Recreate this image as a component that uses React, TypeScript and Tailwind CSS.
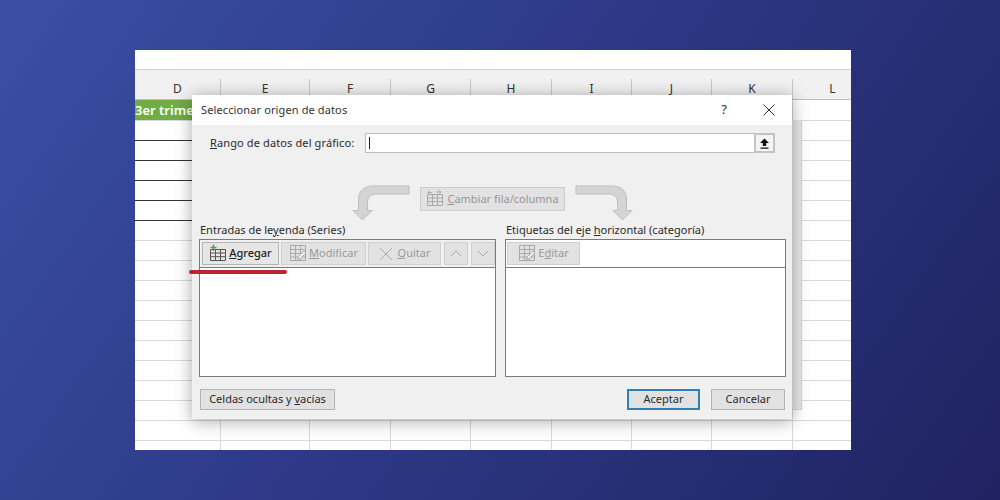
import React from "react";

const cols = [86, 89, 81, 80, 81, 80, 80, 81, 80];
const letters = ["D", "E", "F", "G", "H", "I", "J", "K", "L"];
const rows = Array.from({ length: 18 }, (_, i) => i);

function TableIcon({ plus, pencil, swap, color = "#a9a9a9" }: { plus?: boolean; pencil?: boolean; swap?: boolean; color?: string }) {
  return (
    <svg width="18" height="18" viewBox="0 0 18 18" fill="none" className="shrink-0 -mt-[2px]">
      {plus || swap ? (
        <path d="M1.5 5.5H16.5V16.5H1.5ZM1.5 9H16.5M1.5 12.7H16.5M6.5 5.5V16.5M11.5 5.5V16.5" stroke={color} strokeWidth="1" />
      ) : (
        <path d="M1.5 1.5H16.5V16.5H1.5ZM1.5 5.5H16.5M1.5 9.5H16.5M1.5 13H16.5M6.5 1.5V16.5M11.5 1.5V16.5" stroke={color} strokeWidth="1" />
      )}
      {plus && <path d="M4.5 0.5V7M1.5 3.5H7.5" stroke="#4e9a4a" strokeWidth="1.3" />}
      {swap && <path d="M2 3.5H6M4 1.5L2 3.5L4 5.5M10 3H15M13 1L15 3L13 5" stroke={color} strokeWidth="1" />}
      {pencil && (
        <path d="M8.5 15.5L9.5 12.5L15 7L17 9L11.5 14.5Z" fill="#f0f0f0" stroke={color} strokeWidth="1" />
      )}
    </svg>
  );
}

function CurveArrow({ flip }: { flip?: boolean }) {
  return (
    <svg width="59" height="37" viewBox="0 0 59 37" className={flip ? "-scale-x-100" : ""}>
      <path
        d="M57 2V10H25C18.5 10 15.5 13 15.5 19V26.5H20L10.5 36L1 26.5H6.5V15C6.5 7 12 2 21 2Z"
        fill="#d4d4d4"
        stroke="#bfbfbf"
        strokeWidth="1"
      />
    </svg>
  );
}

function ToolBtn({ w, children, active }: { w: string; children: React.ReactNode; active?: boolean }) {
  return (
    <div
      className={`${w} h-[23px] flex items-center justify-center gap-[2px] border shrink-0 ${
        active ? "border-[#b4b4b4] bg-[#e6e6e6] text-[#222]" : "border-[#d0d0d0] bg-[#e2e2e2] text-[#9a9a9a]"
      }`}
    >
      {children}
    </div>
  );
}

export default function App() {
  return (
    <div
      className="w-[1000px] h-[500px] overflow-hidden pt-[50px] pl-[135px] bg-[linear-gradient(125deg,#3a4fa3_0%,#2f3c8c_40%,#1f2360_100%)]"
      style={{ fontFamily: '"Noto Sans", "Open Sans", sans-serif' }}
    >
      <div className="relative w-[716px] h-[400px] bg-white overflow-hidden">
        <div className="h-[20px] border-b border-[#d0d0d0]" />
        <div className="h-[30px] flex bg-[#f1f1f1] border-b border-[#bdbdbd]">
          {letters.map((l, i) => (
            <div key={l} style={{ width: cols[i] }} className="shrink-0 flex items-end justify-center">
              <div className="w-full h-[20px] border-r border-[#c8c8c8] text-center text-[12px] leading-[20px] text-[#333]">{l}</div>
            </div>
          ))}
        </div>
        {rows.map((r) => (
          <div key={r} className={`flex ${r === 0 ? "h-[21px]" : "h-[20px]"}`}>
            {cols.map((w, i) => (
              <div
                key={i}
                style={{ width: w }}
                className={`shrink-0 border-r border-b border-r-[#d9d9d9] ${
                  i === 0 && r >= 1 && r <= 5 ? "border-b-[#333]" : "border-b-[#d9d9d9]"
                } ${i === 0 && r === 0 ? "bg-[#70ad47] text-white font-semibold text-[13px] leading-[20px] whitespace-nowrap overflow-hidden" : ""}`}
              >
                {i === 0 && r === 0 ? "3er trime" : ""}
              </div>
            ))}
          </div>
        ))}

        {/* dialog behind */}
        <div className="absolute left-[640px] top-[70px] w-[27px] h-[290px] bg-[#e9e9e9] border-r border-b border-[#d4d4d4]" />

        {/* dialog */}
        <div className="absolute left-[57px] top-[45px] w-[600px] h-[324px] flex flex-col bg-[#f0f0f0] shadow-[0_2px_16px_rgba(0,0,0,0.35)] text-[11px] text-[#2a2a2a]">
          <div className="h-[30px] bg-white flex items-center pl-[9px] pr-[16px] text-[#333]">
            <span className="flex-1 tracking-[0.12px]">Seleccionar origen de datos</span>
            <span className="text-[13px] mr-[36px]">?</span>
            <svg width="12" height="12" viewBox="0 0 12 12" className="mr-[1px]">
              <path d="M0.5 0.5L11.5 11.5M11.5 0.5L0.5 11.5" stroke="#333" strokeWidth="1" />
            </svg>
          </div>

          <div className="flex-1 flex flex-col pl-[7px] pr-[6px] pt-[8px]">
            <div className="flex items-center h-[20px]">
              <span className="w-[166px] pl-[11px] shrink-0 whitespace-nowrap tracking-[0.12px]">
                <u>R</u>ango de datos del gráfico:
              </span>
              <div className="w-[410px] h-[20px] bg-white border border-[#bcbcbc] flex items-center justify-between pl-[3px]">
                <div className="w-px h-[12px] bg-[#222]" />
                <div className="w-[21px] h-[20px] -mr-px border-2 border-[#c4c4c4] bg-[#f4f4f4] flex items-center justify-center">
                  <svg width="11" height="11" viewBox="0 0 11 11">
                    <path d="M5.5 0.5L10 5H7.2V8H3.8V5H1ZM1.5 9.5H9.5V10.7H1.5Z" fill="#111" />
                  </svg>
                </div>
              </div>
            </div>

            <div className="h-[36px] mt-[31px] flex items-start">
              <div className="ml-[153px]">
                <CurveArrow />
              </div>
              <div className="ml-[9px] mt-[3px] w-[145px] h-[24px] border border-[#cdcdcd] bg-[#e2e2e2] text-[#969696] flex items-center justify-center gap-[3px]">
                <TableIcon swap />
                <span>
                  <u>C</u>ambiar fila/columna
                </span>
              </div>
              <div className="ml-[9px]">
                <CurveArrow flip />
              </div>
            </div>

            <div className="flex gap-[9px] mt-[2px] items-start">
              <div className="w-[297px] shrink-0">
                <div className="h-[15px] leading-[15px] pl-[1px]">
                  Entradas de le<u>y</u>enda (Series)
                </div>
                <div className="h-[138px] mt-[2px] border border-[#7a7a7a] bg-white">
                  <div className="h-[28px] bg-[#f0f0f0] border-b border-[#7a7a7a] flex items-center pl-[2px] gap-[2px]">
                    <ToolBtn w="w-[77px]" active>
                      <TableIcon plus color="#555" />
                      <span className="font-medium">
                        <u>A</u>gregar
                      </span>
                    </ToolBtn>
                    <ToolBtn w="w-[85px]">
                      <TableIcon pencil />
                      <span>
                        <u>M</u>odificar
                      </span>
                    </ToolBtn>
                    <ToolBtn w="w-[73px]">
                      <svg width="14" height="14" viewBox="0 0 14 14" className="mr-[3px]">
                        <path d="M1 1L13 13M13 1L1 13" stroke="#a9a9a9" strokeWidth="1" />
                      </svg>
                      <span>
                        <u>Q</u>uitar
                      </span>
                    </ToolBtn>
                    <div className="ml-[1px]">
                      <ToolBtn w="w-[24px]">
                        <svg width="12" height="7" viewBox="0 0 12 7">
                          <path d="M1 6L6 1L11 6" stroke="#a9a9a9" fill="none" />
                        </svg>
                      </ToolBtn>
                    </div>
                    <div className="ml-[1px]">
                      <ToolBtn w="w-[24px]">
                        <svg width="12" height="7" viewBox="0 0 12 7">
                          <path d="M1 1L6 6L11 1" stroke="#a9a9a9" fill="none" />
                        </svg>
                      </ToolBtn>
                    </div>
                  </div>
                </div>
              </div>
              <div className="w-[281px] shrink-0">
                <div className="h-[15px] leading-[15px] pl-[1px]">
                  Etiquetas del eje <u>h</u>orizontal (categoría)
                </div>
                <div className="h-[138px] mt-[2px] border border-[#7a7a7a] bg-white">
                  <div className="h-[28px] border-b border-[#7a7a7a] flex items-center pl-[1px]">
                    <ToolBtn w="w-[73px]">
                      <TableIcon pencil />
                      <span>
                        E<u>d</u>itar
                      </span>
                    </ToolBtn>
                  </div>
                </div>
              </div>
            </div>

            <div className="flex items-center mt-[12px] pl-[1px]">
              <div className="w-[135px] h-[21px] flex items-center justify-center border border-[#b4b4b4] bg-[#e1e1e1]">
                <span>
                  Celdas ocultas y <u>v</u>acías
                </span>
              </div>
              <div className="ml-auto w-[73px] h-[21px] flex items-center justify-center border-2 border-[#2f7fb8] bg-[#e1e1e1]">
                Aceptar
              </div>
              <div className="ml-[11px] mr-[1px] w-[74px] h-[21px] flex items-center justify-center border border-[#b4b4b4] bg-[#e1e1e1]">
                Cancelar
              </div>
            </div>
          </div>
        </div>

        {/* red underline annotation */}
        <div className="absolute left-[54px] top-[220px] w-[98px] h-[4px] rounded-full bg-[#bb2430]" />
      </div>
    </div>
  );
}
